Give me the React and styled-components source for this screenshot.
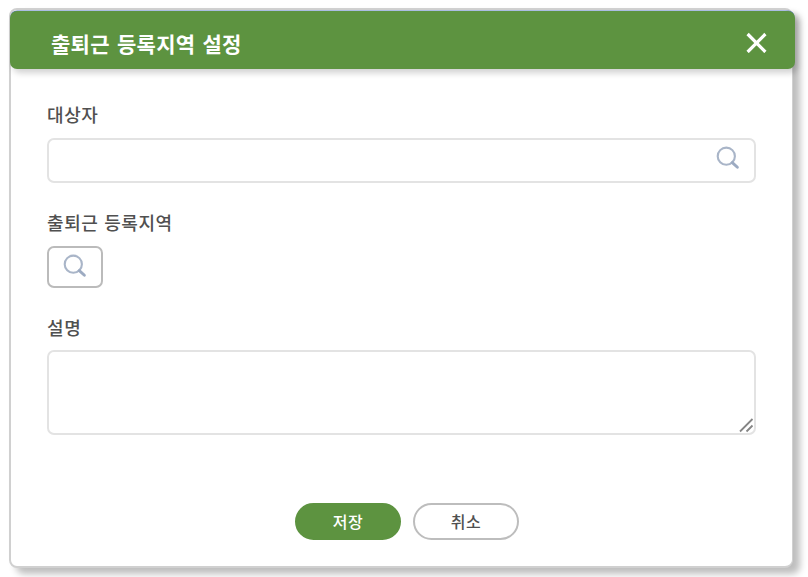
import React from "react";
import styled, { createGlobalStyle } from "styled-components";

const GlobalStyle = createGlobalStyle`
  *, *::before, *::after { box-sizing: border-box; }
  body {
    margin: 0;
    background: #fff;
    overflow: hidden;
    font-family: "Noto Sans CJK KR", "Noto Sans", sans-serif;
  }
  button, textarea { font-family: inherit; }
`;

const Page = styled.main`
  height: 577px;
  padding: 8px 0 0 9px;
  overflow: hidden;
`;

const Dialog = styled.section`
  display: flex;
  flex-direction: column;
  width: 784px;
  height: 560px;
  border: 2px solid #d0d0d0;
  border-right-width: 1px;
  border-radius: 8px;
  background: #fff;
  box-shadow: 7px 6px 7px rgba(0, 0, 0, 0.26);
`;

const Header = styled.header`
  display: flex;
  flex: none;
  align-items: center;
  justify-content: space-between;
  width: 785px;
  height: 58px;
  margin: 1px 0 0 -1px;
  padding: 5px 28px 0 41px;
  border-radius: 7px;
  background: #5d9340;
  box-shadow: 0 -1px 0 -0.4px #5b7fc9, 3px 4px 6px rgba(0, 0, 0, 0.18);
`;

const Title = styled.h1`
  margin: 0;
  color: #fff;
  font-size: 21px;
  font-weight: 700;
  letter-spacing: 0.3px;
  word-spacing: 2px;
  line-height: 30px;
  white-space: nowrap;
`;

const CloseButton = styled.button`
  display: flex;
  padding: 0;
  border: 0;
  background: none;
  color: #fff;
`;

const Form = styled.form`
  display: flex;
  flex: 1;
  flex-direction: column;
  align-items: flex-start;
  padding: 33px 36px 0;
`;

const Label = styled.label`
  height: 24px;
  margin: ${({ $top = 0 }) => $top}px 0 ${({ $gap = 12 }) => $gap}px;
  color: #505050;
  font-size: 18px;
  font-weight: 500;
  letter-spacing: 0.6px;
  word-spacing: 1px;
  line-height: 24px;
  white-space: nowrap;
`;

const SearchField = styled.div`
  display: flex;
  align-items: center;
  justify-content: flex-end;
  width: 709px;
  height: 45px;
  padding: 0 14px 5px 0;
  border: 2px solid #e3e3e3;
  border-radius: 7px;
`;

const PickButton = styled.button`
  display: flex;
  align-items: center;
  justify-content: center;
  width: 56px;
  height: 42px;
  padding: 0 0 2px;
  border: 2px solid #bbb;
  border-radius: 7px;
  background: #fff;
`;

const DescriptionBox = styled.div`
  display: flex;
  align-items: flex-end;
  width: 709px;
  height: 85px;
  border: 2px solid #e3e3e3;
  border-radius: 7px;
`;

const Description = styled.textarea`
  flex: 1;
  align-self: stretch;
  margin-right: -15px;
  padding: 8px 20px 8px 8px;
  border: 0;
  outline: 0;
  background: transparent;
  resize: none;
`;

const Actions = styled.div`
  display: flex;
  gap: 12px;
  margin: 68px 0 0 248px;
`;

const ActionButton = styled.button`
  width: 106px;
  height: 37px;
  padding: 0 0 2px;
  border: 2px solid ${({ $primary }) => ($primary ? "#5d9340" : "#bdbdbd")};
  border-radius: 19px;
  background: ${({ $primary }) => ($primary ? "#5d9340" : "#fff")};
  color: ${({ $primary }) => ($primary ? "#fff" : "#505050")};
  font-size: 16px;
  font-weight: 500;
  letter-spacing: 0.6px;
  line-height: 22px;
`;

const SearchIcon = () => (
  <svg width="24" height="24" viewBox="0 0 24 24" fill="none" stroke="#a9b5c8">
    <circle cx="10.3" cy="10.2" r="8.6" strokeWidth="2.1" />
    <path d="M16.3 16.6 L21.4 21.3" stroke="#9dabc2" strokeWidth="2.9" strokeLinecap="round" />
  </svg>
);

const CloseIcon = () => (
  <svg width="21" height="21" viewBox="0 0 21 21" stroke="currentColor" strokeWidth="3.2">
    <path d="M1.6 2 L19.4 20 M19.4 2 L1.6 20" />
  </svg>
);

const ResizeGrip = () => (
  <svg width="15" height="15" viewBox="0 0 15 15" stroke="#858585" strokeWidth="1.8">
    <path d="M1 13.5 L13.5 1 M7.5 13.5 L13.5 7.5" />
  </svg>
);

export default function App() {
  return (
    <>
      <GlobalStyle />
      <Page>
        <Dialog role="dialog" aria-labelledby="title">
          <Header>
            <Title id="title">출퇴근 등록지역 설정</Title>
            <CloseButton aria-label="닫기">
              <CloseIcon />
            </CloseButton>
          </Header>
          <Form onSubmit={(e) => e.preventDefault()}>
            <Label>대상자</Label>
            <SearchField>
              <SearchIcon />
            </SearchField>
            <Label $top={27} $gap={12}>출퇴근 등록지역</Label>
            <PickButton type="button" aria-label="출퇴근 등록지역 검색">
              <SearchIcon />
            </PickButton>
            <Label $top={27} $gap={11} htmlFor="description">설명</Label>
            <DescriptionBox>
              <Description id="description" />
              <ResizeGrip />
            </DescriptionBox>
            <Actions>
              <ActionButton $primary type="submit">저장</ActionButton>
              <ActionButton type="button">취소</ActionButton>
            </Actions>
          </Form>
        </Dialog>
      </Page>
    </>
  );
}
